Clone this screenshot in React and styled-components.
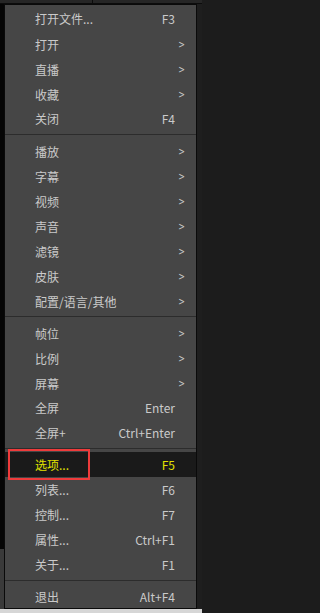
import styled, { createGlobalStyle } from 'styled-components';

const GlobalStyle = createGlobalStyle`
  html, body {
    margin: 0;
    padding: 0;
    background: #1c1c1c;
  }
`;

const Screen = styled.div`
  width: 202px;
  height: 613px;
  display: flex;
  flex-direction: column;
  background: #1c1c1c;
  overflow: hidden;
  font-family: "Noto Sans CJK SC", "Noto Sans", sans-serif;
`;

const TopBar = styled.div`
  height: 4px;
  flex: none;
  display: flex;
  background: #262626;
  border-bottom: 1px solid #0c0c0c;
  box-sizing: border-box;
`;

const TopSegment = styled.div`
  width: ${p => p.width}px;
  border-right: ${p => (p.divider ? '1px solid #0c0c0c' : 'none')};
`;

const Middle = styled.div`
  flex: 1;
  display: flex;
  min-height: 0;
`;

const Gutter = styled.div`
  width: ${p => p.width}px;
  flex: none;
  background: ${p => p.bg};
  display: flex;
  flex-direction: column;
  justify-content: flex-end;
`;

const GutterTail = styled.div`
  height: 60px;
  background: #3a3a3a;
`;

const Menu = styled.div`
  flex: 1;
  background: #464646;
  border: 1px solid #0a0a0a;
  padding: 1px 0;
  display: flex;
  flex-direction: column;
`;

const Row = styled.div`
  position: relative;
  height: 25px;
  display: grid;
  grid-template-columns: 1fr auto 21px;
  align-items: center;
  padding-left: 30px;
  font-size: 12px;
  line-height: 25px;
  color: ${p => (p.active ? '#e2e200' : '#cacaca')};
  background: ${p => (p.active ? '#1a1a1a' : 'transparent')};
  white-space: nowrap;
`;

const Label = styled.span``;

const Shortcut = styled.span`
  text-align: right;
`;

const Arrow = styled.span`
  font-size: 10px;
  padding-left: 4px;
  padding-top: 1px;
  font-family: "DejaVu Sans", sans-serif;
  transform: scaleX(0.8);
  transform-origin: left center;
`;

const Separator = styled.div`
  height: 7px;
  display: flex;
  align-items: center;
  &::after {
    content: '';
    flex: 1;
    height: 1px;
    background: #2c2c2c;
  }
`;

const Marker = styled.div`
  position: absolute;
  left: 3px;
  top: -3px;
  width: 82px;
  height: 31px;
  border: 2px solid #ee3b3b;
  box-sizing: border-box;
  pointer-events: none;
`;

const BottomBar = styled.div`
  height: 4px;
  flex: none;
  background: #d6d6d6;
`;

const groups = [
  [
    { label: '打开文件...', key: 'F3' },
    { label: '打开', sub: true },
    { label: '直播', sub: true },
    { label: '收藏', sub: true },
    { label: '关闭', key: 'F4' },
  ],
  [
    { label: '播放', sub: true },
    { label: '字幕', sub: true },
    { label: '视频', sub: true },
    { label: '声音', sub: true },
    { label: '滤镜', sub: true },
    { label: '皮肤', sub: true },
    { label: '配置/语言/其他', sub: true },
  ],
  [
    { label: '帧位', sub: true },
    { label: '比例', sub: true },
    { label: '屏幕', sub: true },
    { label: '全屏', key: 'Enter' },
    { label: '全屏+', key: 'Ctrl+Enter' },
  ],
  [
    { label: '选项...', key: 'F5', active: true },
    { label: '列表...', key: 'F6' },
    { label: '控制...', key: 'F7' },
    { label: '属性...', key: 'Ctrl+F1' },
    { label: '关于...', key: 'F1' },
  ],
  [{ label: '退出', key: 'Alt+F4' }],
];

const MenuRow = ({ item }) => (
  <Row active={item.active}>
    <Label>{item.label}</Label>
    <Shortcut>{item.key || ''}</Shortcut>
    <Arrow>{item.sub ? '>' : ''}</Arrow>
    {item.active && <Marker />}
  </Row>
);

export default function App() {
  return (
    <>
      <GlobalStyle />
      <Screen>
        <TopBar>
          <TopSegment width={92} divider />
          <TopSegment width={110} />
        </TopBar>
        <Middle>
          <Gutter width={4} bg="#050505">
            <GutterTail />
          </Gutter>
          <Menu>
            {groups.map((group, gi) => (
              <div key={gi}>
                {gi > 0 && <Separator />}
                {group.map(item => (
                  <MenuRow key={item.label} item={item} />
                ))}
              </div>
            ))}
          </Menu>
          <Gutter width={5} bg="#1e1e1e" />
        </Middle>
        <BottomBar />
      </Screen>
    </>
  );
}
